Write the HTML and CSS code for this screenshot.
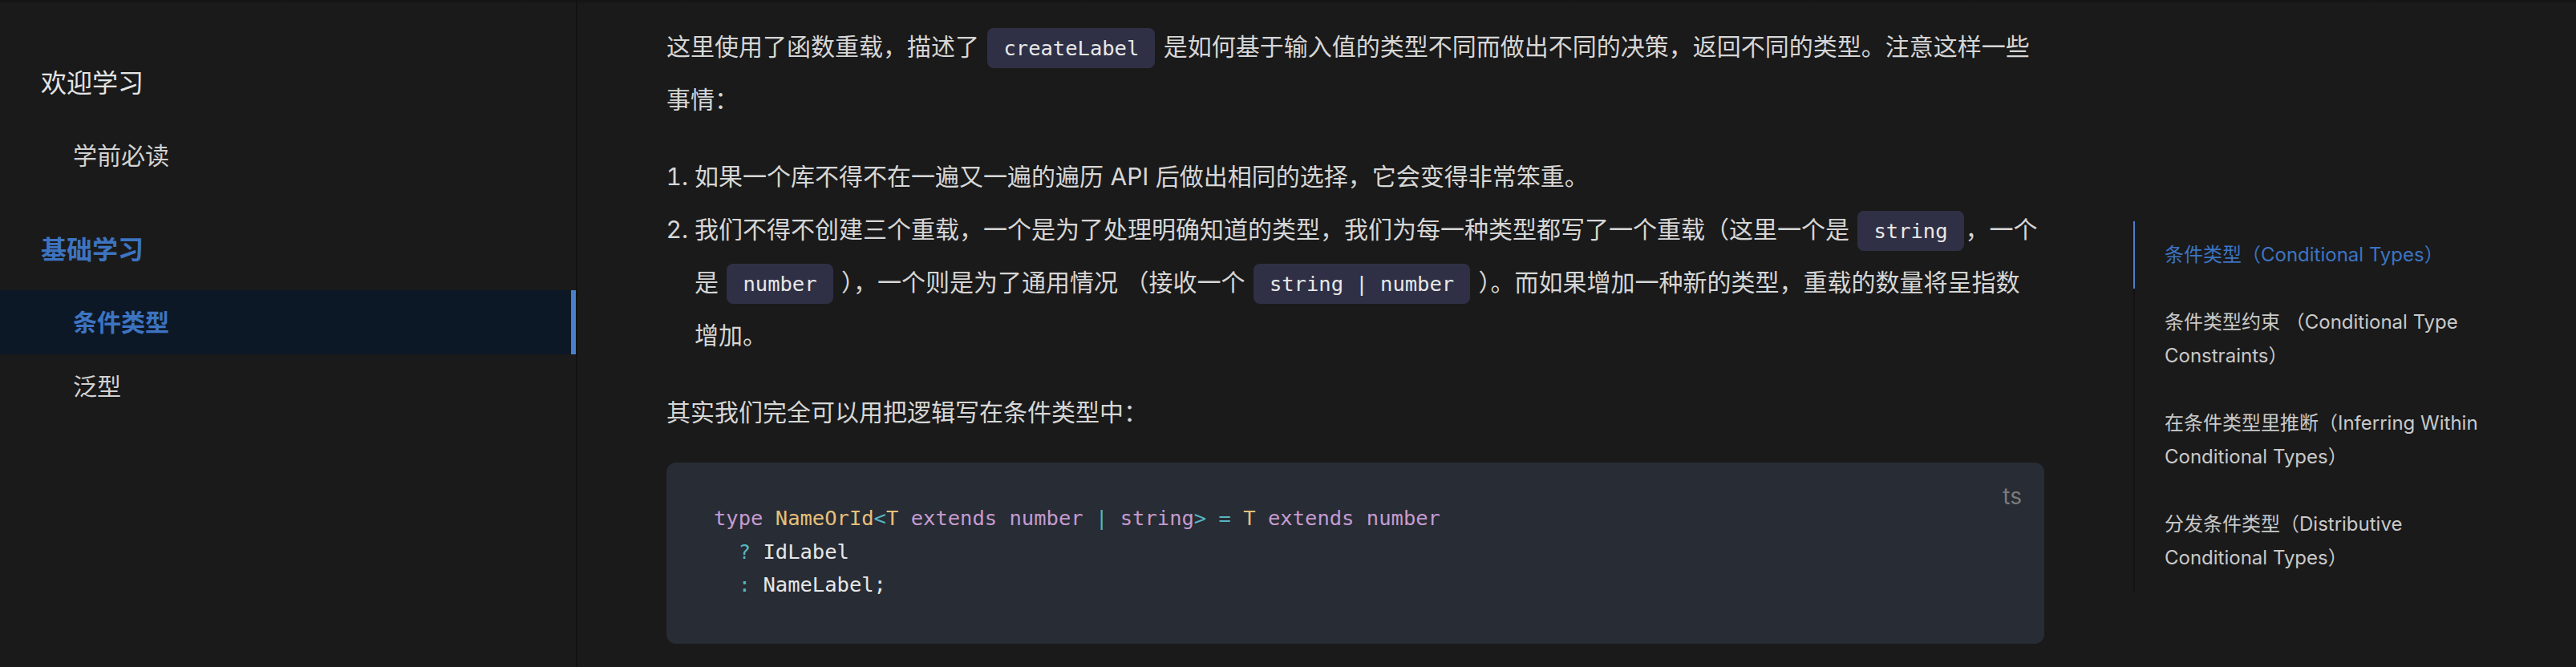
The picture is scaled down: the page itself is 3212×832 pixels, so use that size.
FILE: index.html
```html
<!DOCTYPE html>
<html lang="zh-CN">
<head>
<meta charset="utf-8">
<title>条件类型</title>
<link rel="stylesheet" href="styles.css">
</head>
<body>
<div class="layout">
  <aside class="sidebar">
    <section class="group">
      <p class="group-title">欢迎学习</p>
      <a class="item">学前必读</a>
    </section>
    <section class="group group-next">
      <p class="group-title is-active">基础学习</p>
      <a class="item is-active">条件类型</a>
      <a class="item">泛型</a>
    </section>
  </aside>

  <main class="content">
    <p>这里使用了函数重载，描述了 <code>createLabel</code> 是如何基于输入值的类型不同而做出不同的决策，返回不同的类型。注意这样一些事情：</p>
    <ol>
      <li>如果一个库不得不在一遍又一遍的遍历 API 后做出相同的选择，它会变得非常笨重。</li>
      <li>我们不得不创建三个重载，一个是为了处理明确知道的类型，我们为每一种类型都写了一个重载（这里一个是 <code>string</code>，一个是 <code>number</code> ），一个则是为了通用情况 （接收一个 <code>string | number</code> ）。而如果增加一种新的类型，重载的数量将呈指数<span class="nowrap">增加。</span></li>
    </ol>
    <p>其实我们完全可以用把逻辑写在条件类型中：</p>
    <div class="code-block">
      <span class="lang">ts</span>
      <pre><code><span class="kw">type</span> <span class="ty">NameOrId</span><span class="op">&lt;</span><span class="ty">T</span> <span class="kw">extends</span> <span class="kw">number</span> <span class="op">|</span> <span class="kw">string</span><span class="op">&gt;</span> <span class="op">=</span> <span class="ty">T</span> <span class="kw">extends</span> <span class="kw">number</span>
  <span class="op">?</span> IdLabel
  <span class="op">:</span> NameLabel;</code></pre>
    </div>
  </main>

  <nav class="toc">
    <ul class="toc-list">
      <li class="toc-item is-active">条件类型（Conditional Types）</li>
      <li class="toc-item">条件类型约束 （Conditional Type Constraints）</li>
      <li class="toc-item">在条件类型里推断（Inferring Within Conditional Types）</li>
      <li class="toc-item">分发条件类型（Distributive Conditional Types）</li>
    </ul>
  </nav>
</div>
</body>
</html>
```

FILE: styles.css
```css
* {
  box-sizing: border-box;
}

html, body {
  margin: 0;
  padding: 0;
}

body {
  width: 3212px;
  height: 832px;
  overflow: hidden;
  background: linear-gradient(to bottom, #141414 0, #1a1a1a 5px) no-repeat, #1a1a1a;
  font-family: Inter, "Noto Sans CJK SC", sans-serif;
  color: #d6d6d6;
}

.layout {
  display: flex;
  height: 832px;
}

/* ---------- sidebar ---------- */
.sidebar {
  flex: none;
  width: 720px;
  border-right: 2px solid #121212;
  padding-top: 64px;
}

.group {
  display: flex;
  flex-direction: column;
}

.group-next {
  margin-top: 38px;
}

.group-title {
  margin: 0 0 10px;
  height: 80px;
  line-height: 80px;
  padding-left: 51px;
  font-size: 32px;
  color: #e4e4e4;
}

.group-title.is-active {
  color: #3d74c2;
  font-weight: 700;
}

.item {
  display: block;
  height: 80px;
  line-height: 80px;
  padding-left: 91px;
  font-size: 30px;
  color: #d2d2d2;
  border-right: 6px solid transparent;
}

.item.is-active {
  background: #0d1826;
  border-right-color: #4a7fc9;
  color: #3d74c2;
  font-weight: 700;
}

/* ---------- content ---------- */
.content {
  flex: none;
  width: 1940px;
  padding: 25px 111px 0;
  font-size: 30px;
  line-height: 66px;
}

.content p {
  margin: 0 0 30px;
}

.content ol {
  margin: 0 0 30px;
  padding-left: 35px;
}

.nowrap {
  white-space: nowrap;
}

.content code {
  font-family: "DejaVu Sans Mono", monospace;
  font-size: 25.5px;
  line-height: 1;
  background: #2f3045;
  color: #e8e8e8;
  padding: 10px 20px;
  margin: 0 2px;
  border-radius: 8px;
}

.code-block {
  position: relative;
  background: #282c34;
  border-radius: 12px;
  padding: 49px 59px 52px;
}

.code-block pre {
  margin: 0;
}

.code-block pre code {
  display: block;
  background: none;
  padding: 0;
  margin: 0;
  border-radius: 0;
  font-size: 25.5px;
  line-height: 41.5px;
  color: #e6e6e6;
}

.lang {
  position: absolute;
  top: 28px;
  right: 28px;
  font-size: 28px;
  line-height: 1;
  color: #7b7b7b;
}

.kw { color: #c59bd0; }
.ty { color: #e5c07b; }
.op { color: #56b6c2; }

/* ---------- toc ---------- */
.toc {
  flex: none;
  padding-top: 276px;
}

.toc-list {
  list-style: none;
  margin: 0;
  width: 443px;
  padding: 0 0 0 37px;
  border-left: 2px solid #131313;
}

.toc-item {
  padding: 21px 0;
  font-size: 24px;
  line-height: 42px;
  color: #c9c9c9;
}

.toc-item.is-active {
  color: #3d74c2;
  margin-left: -39px;
  padding-left: 37px;
  border-left: 2px solid #4a7fc9;
}
```
